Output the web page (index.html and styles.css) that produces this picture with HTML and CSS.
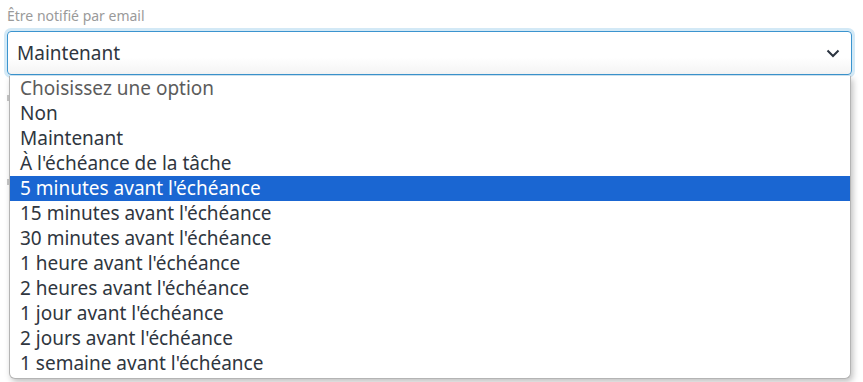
FILE: index.html
```html
<!DOCTYPE html>
<html lang="fr">

<head>
    <meta charset="UTF-8">
    <title>Notification</title>
    <link rel="stylesheet" href="styles.css">
</head>

<body>
    <div class="field">
        <div class="field-label">Être notifié par email</div>
        <div class="field-select">
            <span class="field-select-value">Maintenant</span>
            <svg class="field-select-arrow" width="14" height="9" viewBox="0 0 14 9">
                <path d="M1.5 1.5 L7 7 L12.5 1.5" fill="none" stroke="#2b3440" stroke-width="2" />
            </svg>
        </div>
        <div class="field-under">
            <div class="field-under-mark"></div>
            <div class="field-under-mark second"></div>
        </div>
        <ul class="field-options">
            <li class="field-option placeholder">Choisissez une option</li>
            <li class="field-option">Non</li>
            <li class="field-option">Maintenant</li>
            <li class="field-option">À l'échéance de la tâche</li>
            <li class="field-option active">5 minutes avant l'échéance</li>
            <li class="field-option">15 minutes avant l'échéance</li>
            <li class="field-option">30 minutes avant l'échéance</li>
            <li class="field-option">1 heure avant l'échéance</li>
            <li class="field-option">2 heures avant l'échéance</li>
            <li class="field-option">1 jour avant l'échéance</li>
            <li class="field-option">2 jours avant l'échéance</li>
            <li class="field-option">1 semaine avant l'échéance</li>
        </ul>
    </div>
</body>

</html>
```

FILE: styles.css
```css
body {
    background: #FFFFFF;
    margin: 0;
    font-family: "Noto Sans", "Open Sans", sans-serif;
}

.field {
    position: relative;
    padding: 6px 11px 0 7px;
}

.field-label {
    font-size: 14px;
    line-height: 20px;
    color: #9a9a9a;
    margin-bottom: 5px;
}

.field-select {
    display: flex;
    justify-content: space-between;
    align-items: center;
    height: 42px;
    padding: 0 11px 0 9px;
    border: 1px solid #3b94cf;
    border-radius: 4px;
    box-shadow: 0 0 0 3px #d3e9f6;
    background: linear-gradient(#FFFFFF 60%, #f4f4f4);
}

.field-select-value {
    font-size: 19px;
    color: #2f3640;
}

.field-under {
    height: 290px;
}

.field-under-mark {
    width: 2px;
    height: 6px;
    margin-top: 20px;
    background: #c8c8c8;
}

.field-under-mark.second {
    margin-top: 78px;
}

.field-options {
    position: absolute;
    top: 76px;
    left: 9px;
    width: 840px;
    margin: 0;
    padding: 0 0 2px;
    list-style: none;
    background: #FFFFFF;
    border: 1px solid #b4b4b4;
    border-top: none;
    border-radius: 0 0 6px 6px;
    box-shadow: 2px 3px 6px rgba(0, 0, 0, 0.25);
}

.field-option {
    height: 25px;
    line-height: 25px;
    padding-left: 10px;
    font-size: 19px;
    color: #2f3640;
    white-space: nowrap;
}

.field-option.placeholder {
    color: #5c5c5c;
}

.field-option.active {
    background: #1a66d2;
    color: #FFFFFF;
}
```
